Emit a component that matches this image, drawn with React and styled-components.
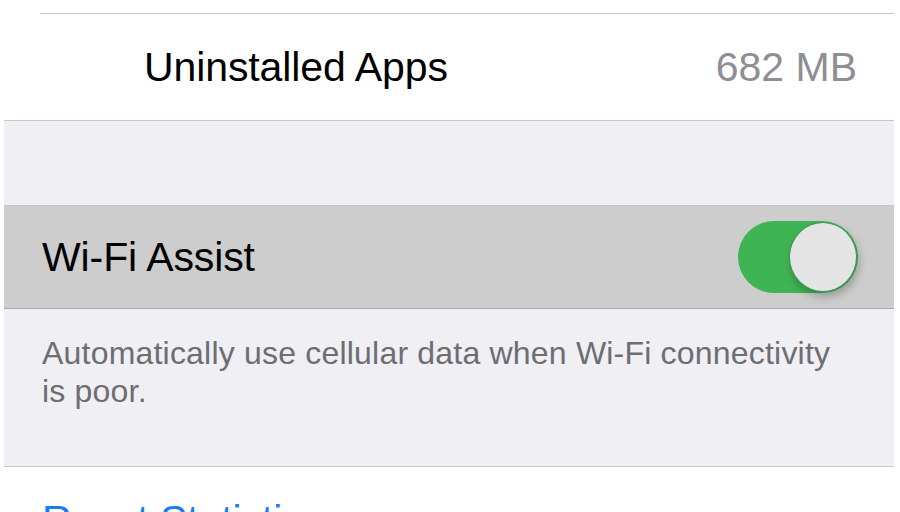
import styled, { createGlobalStyle } from 'styled-components';

const GlobalStyle = createGlobalStyle`
  html, body {
    margin: 0;
    padding: 0;
    background: #ffffff;
    overflow: hidden;
  }
  body {
    font-family: 'Liberation Sans', Arial, sans-serif;
    -webkit-font-smoothing: antialiased;
  }
`;

const Screen = styled.div`
  margin: 0 6px 0 4px;
  background: #efeff4;
`;

const Group = styled.div`
  background: #ffffff;
  border-bottom: 1px solid ${(p) => p.$line || '#c8c7cc'};
`;

const Separator = styled.div`
  height: 1px;
  margin-left: ${(p) => p.$inset || 0}px;
  background: #c8c7cc;
`;

const Cell = styled.div`
  display: flex;
  align-items: center;
  justify-content: space-between;
  height: ${(p) => p.$height}px;
  padding: 0 ${(p) => p.$right || 36}px 0 ${(p) => p.$left || 38}px;
  background: ${(p) => p.$bg || '#ffffff'};
`;

const Label = styled.span`
  font-size: 41px;
  color: ${(p) => p.$color || '#000000'};
  letter-spacing: -0.1px;
`;

const Value = styled.span`
  font-size: 41px;
  color: #8e8e93;
`;

const Spacer = styled.div`
  height: ${(p) => p.$height}px;
  border-bottom: 1px solid #c8c7cc;
`;

const Footer = styled.p`
  margin: 0;
  padding: 25px 60px 56px 38px;
  font-size: 32px;
  line-height: 38px;
  letter-spacing: 0.2px;
  color: #6d6d72;
  border-bottom: 1px solid #c8c7cc;
`;

const SwitchTrack = styled.div`
  position: relative;
  width: 120px;
  height: 72px;
  border-radius: 36px;
  background: ${(p) => (p.$on ? '#3fb454' : '#e5e5ea')};
  flex-shrink: 0;
`;

const SwitchKnob = styled.div`
  position: absolute;
  top: 1px;
  right: 1px;
  width: 68px;
  height: 70px;
  border-radius: 50%;
  background: #e4e4e4;
  border: 1px solid #3a9a4c;
  box-sizing: border-box;
  box-shadow: 2px 5px 8px rgba(0, 0, 0, 0.25);
`;

const Toggle = ({ on }) => (
  <SwitchTrack $on={on}>
    <SwitchKnob />
  </SwitchTrack>
);

const Bottom = styled.div`
  background: #ffffff;
  height: 120px;
`;

const App = () => (
  <>
    <GlobalStyle />
    <Screen>
      <Group>
        <Cell $height={13} />
        <Separator $inset={36} />
        <Cell $height={106} $left={140} $right={37}>
          <Label>Uninstalled Apps</Label>
          <Value>682 MB</Value>
        </Cell>
      </Group>
      <Spacer $height={84} />
      <Group $line="#a9a9ad">
        <Cell $height={102} $bg="#cdcdcd">
          <Label>Wi-Fi Assist</Label>
          <Toggle on />
        </Cell>
      </Group>
      <Footer>
        Automatically use cellular data when Wi-Fi connectivity is poor.
      </Footer>
      <Bottom>
        <Cell $height={106}>
          <Label $color="#1a7cf5">Reset Statistics</Label>
        </Cell>
      </Bottom>
    </Screen>
  </>
);

export default App;
